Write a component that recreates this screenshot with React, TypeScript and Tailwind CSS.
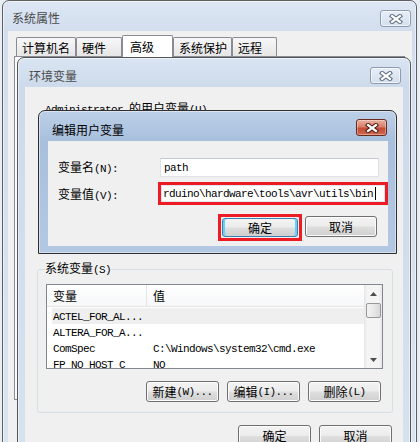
import React from 'react';

const cjk = "font-['Noto_Sans_CJK_SC',sans-serif]";

// SimSun-like mixing: CJK at 12px, ASCII as half-width 6px mono
const Txt = ({ s }: { s: string }) => (
  <>
    {s
      .split(/([\x20-\x7e]+)/)
      .filter(Boolean)
      .map((p, i) =>
        /^[\x20-\x7e]+$/.test(p) ? (
          <span key={i} className="font-['Liberation_Mono',monospace] text-[11px] tracking-[-0.6px] whitespace-pre">
            {p}
          </span>
        ) : (
          <span key={i}>{p}</span>
        )
      )}
  </>
);

const CloseBtn = ({ active = false }: { active?: boolean }) => (
  <div
    className={`w-[31px] h-[17px] rounded-[3px] border flex items-center justify-center ${
      active
        ? 'border-[#6b2a1f] bg-[linear-gradient(#eab0a0,#d8806b_45%,#c24b34_55%,#cd6a50)] shadow-[inset_0_0_0_1px_rgba(255,255,255,0.35)]'
        : 'border-[#8d9cb0] bg-[linear-gradient(#e8eef7,#d4dfed)] shadow-[inset_0_0_0_1px_rgba(255,255,255,0.6)]'
    }`}
  >
    <svg width="14" height="10" viewBox="0 0 14 10">
      <path d="M3 2 L11 8 M11 2 L3 8" stroke={active ? '#4a1a12' : '#5d6b7e'} strokeWidth="4.2" strokeLinecap="square" />
      <path d="M3 2 L11 8 M11 2 L3 8" stroke="#fff" strokeWidth="2.2" strokeLinecap="square" />
    </svg>
  </div>
);

const Btn = ({ label, className = '', def = false }: { label: string; className?: string; def?: boolean }) => (
  <div
    className={`flex items-center justify-center rounded-[3px] border bg-[linear-gradient(#f3f3f3,#ececec_48%,#dedede_52%,#d0d0d0)] ${
      def
        ? 'border-[#3c7fb1] shadow-[inset_2px_0_0_#62d3f6,inset_-2px_0_0_#62d3f6]'
        : 'border-[#707070] shadow-[inset_0_0_0_1px_#fbfbfb]'
    } ${className}`}
  >
    <Txt s={label} />
  </div>
);

const tabs = [
  { name: '计算机名', w: 'w-[60px]' },
  { name: '硬件', w: 'w-[46px]' },
  { name: '高级', w: 'w-[51px]', active: true },
  { name: '系统保护', w: 'w-[59px]' },
  { name: '远程', w: 'w-[45px]' },
];

const rows = [
  ['ACTEL_FOR_AL...', ''],
  ['ALTERA_FOR_A...', ''],
  ['ComSpec', 'C:\\Windows\\system32\\cmd.exe'],
  ['FP_NO_HOST_C', 'NO'],
];

export default function App() {
  return (
    <div className={`relative w-[420px] h-[442px] overflow-hidden bg-[#e9eef5] text-[12px] leading-[16px] text-black ${cjk}`}>
      {/* 系统属性 */}
      <div className="absolute left-[2px] top-0 w-[415px] h-[444px] rounded-t-[7px] border border-[#5f5f5f] bg-[linear-gradient(#dde7f4,#d2deee_30px,#d9e4f1)] shadow-[inset_0_0_0_1px_rgba(255,255,255,0.5)] flex flex-col">
        <div className="h-[30px] shrink-0 flex items-start">
          <span className="ml-[9px] mt-[9px] text-[#4a4a4a]">系统属性</span>
          <div className="ml-auto mt-[9px] mr-[5px]">
            <CloseBtn />
          </div>
        </div>
        <div className="ml-[5px] mr-[4px] flex-1 bg-[#f0f0f0] pl-[6px] pt-[4px]">
          <div className="w-[391px]">
            <div className="h-[21px] flex items-end pl-[2px] relative z-10">
              {tabs.map((t) =>
                t.active ? (
                  <div key={t.name} className={`${t.w} h-[22px] -mb-px border border-b-0 border-[#898c95] rounded-t-[2px] bg-white pl-[7px] pt-[3px]`}>
                    {t.name}
                  </div>
                ) : (
                  <div key={t.name} className={`${t.w} h-[19px] border border-b-0 border-[#898c95] rounded-t-[2px] bg-[linear-gradient(#f7f7f7,#e6e6e6)] pl-[5px] pt-[2px]`}>
                    {t.name}
                  </div>
                )
              )}
            </div>
            <div className="h-[344px] border border-[#898c95] bg-[#fbfbfb]" />
          </div>
        </div>
      </div>

      {/* 环境变量 */}
      <div className="absolute left-[17px] top-[57px] w-[394px] h-[400px] rounded-t-[7px] border border-[#555] bg-[linear-gradient(#d9e5f2,#cddaeb_29px,#d6e2f0)] shadow-[inset_0_0_0_1px_rgba(255,255,255,0.5)] flex flex-col">
        <div className="h-[29px] shrink-0 flex items-start">
          <span className="ml-[11px] mt-[10px] text-[#4a4a4a]">环境变量</span>
          <div className="ml-auto mt-[9px] mr-[9px]">
            <CloseBtn />
          </div>
        </div>
        <div className="mx-[7px] flex-1 bg-[#f0f0f0] flex flex-col">
          <div className="mt-[13px] ml-[20px] h-[16px]">
            <Txt s="Administrator 的用户变量(U)" />
          </div>
          <div className="h-[144px] shrink-0" />

          <fieldset className="ml-[12px] w-[356px] min-w-0 border border-[#d5dfe5] rounded-[3px] pl-[7px] pr-[9px] pb-[10px]">
            <legend className="leading-[16px]">
              <Txt s="系统变量(S)" />
            </legend>
            <div className="ml-[1px] mt-[6px] w-[337px] h-[85px] border border-[#828790] bg-white flex overflow-hidden">
              <div className="flex-1 flex flex-col">
                <div className="h-[22px] shrink-0 flex border-b border-[#e5e5e5] bg-[linear-gradient(#ffffff,#f6f7f9)]">
                  <div className="w-[100px] border-r border-[#e5e5e5] pl-[6px] flex items-center">变量</div>
                  <div className="flex-1 pl-[6px] flex items-center">值</div>
                </div>
                <div className="mt-[1px] ml-[5px] flex flex-col">
                  {rows.map(([k, v], i) => (
                    <div key={k} className={`h-[16px] shrink-0 flex items-center ${i === 0 ? 'bg-[#efefef]' : ''}`}>
                      <div className="w-[101px] pl-[1px]">
                        <Txt s={k} />
                      </div>
                      <div>
                        <Txt s={v} />
                      </div>
                    </div>
                  ))}
                </div>
              </div>
              <div className="w-[18px] shrink-0 flex flex-col bg-[linear-gradient(90deg,#e6e6e6,#f4f4f4_3px,#f4f4f4_15px,#e6e6e6)]">
                <div className="h-[17px] flex items-center justify-center">
                  <svg width="7" height="4" viewBox="0 0 7 4">
                    <path d="M0 4 L3.5 0 L7 4 Z" fill="#4d4d4d" />
                  </svg>
                </div>
                <div className="mt-[1px] mx-auto w-[15px] h-[15px] rounded-[2px] border border-[#979797] bg-[linear-gradient(90deg,#f3f3f3,#e8e8e8_50%,#d8d8d8)]" />
                <div className="flex-1" />
                <div className="h-[17px] flex items-center justify-center">
                  <svg width="7" height="4" viewBox="0 0 7 4">
                    <path d="M0 0 L7 0 L3.5 4 Z" fill="#4d4d4d" />
                  </svg>
                </div>
              </div>
            </div>
            <div className="mt-[12px] mr-[2px] flex justify-end gap-[8px]">
              <Btn label="新建(W)..." className="w-[73px] h-[21px]" />
              <Btn label="编辑(I)..." className="w-[73px] h-[21px]" />
              <Btn label="删除(L)" className="w-[73px] h-[21px]" />
            </div>
          </fieldset>

          <div className="mt-[12px] mr-[11px] flex justify-end gap-[8px]">
            <Btn label="确定" className="w-[73px] h-[22px]" />
            <Btn label="取消" className="w-[73px] h-[22px]" />
          </div>
        </div>
      </div>

      {/* 编辑用户变量 */}
      <div className="absolute left-[38px] top-[110px] w-[359px] h-[144px] rounded-t-[7px] border border-[#2f2f2f] bg-[linear-gradient(#bdd0e8,#a8bfdd_30px,#b3c8e2)] shadow-[inset_0_0_0_1px_rgba(255,255,255,0.45)] flex flex-col">
        <div className="h-[30px] shrink-0 flex items-start">
          <span className="ml-[13px] mt-[11px]">编辑用户变量</span>
          <div className="ml-auto mt-[8px] mr-[9px]">
            <CloseBtn active />
          </div>
        </div>
        <div className="ml-[9px] w-[340px] h-[105px] bg-[#f0f0f0] flex flex-col pl-[10px]">
          <div className="mt-[17px] h-[19px] flex items-center">
            <div className="w-[102px]">
              <Txt s="变量名(N):" />
            </div>
            <div className="w-[219px] h-full border border-[#dfe3e8] border-t-[#c4c8cf] bg-white pl-[3px] flex items-center">
              <Txt s="path" />
            </div>
          </div>
          <div className="mt-[5px] h-[23px] flex items-center">
            <div className="w-[100px] pt-[2px]">
              <Txt s="变量值(V):" />
            </div>
            <div className="w-[230px] h-full border-[3px] border-[#ed1c24] bg-white">
              <div className="h-full border border-[#e2e6eb] pl-[1px] flex items-center overflow-hidden">
                <Txt s={'rduino\\hardware\\tools\\avr\\utils\\bin'} />
                <span className="ml-[2px] w-px h-[13px] bg-black" />
              </div>
            </div>
          </div>
          <div className="mt-[9px] pl-[160px] flex items-start">
            <div className="w-[84px] h-[27px] border-[3px] border-[#ed1c24] p-[1px]">
              <Btn label="确定" def className="w-full h-full" />
            </div>
            <Btn label="取消" className="ml-[3px] mt-[2px] w-[72px] h-[21px]" />
          </div>
        </div>
      </div>
    </div>
  );
}
